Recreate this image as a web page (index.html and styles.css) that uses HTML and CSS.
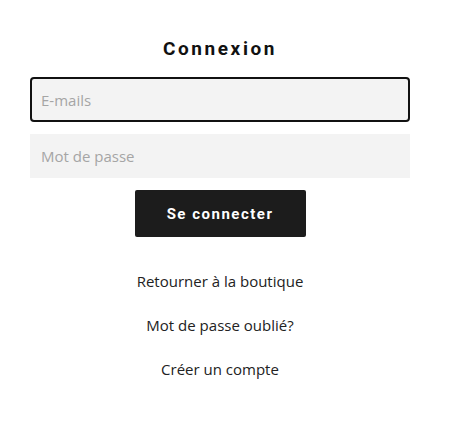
FILE: index.html
```html
<!DOCTYPE html>
<html lang="fr">
<head>
<meta charset="utf-8">
<title>Connexion</title>
<link rel="stylesheet" href="styles.css">
</head>
<body>
<main class="page">
  <form class="login">
    <h1 class="title">Connexion</h1>
    <input class="field field--focus" type="email" placeholder="E-mails" autofocus>
    <input class="field" type="password" placeholder="Mot de passe">
    <button class="submit" type="button">Se connecter</button>
    <nav class="links">
      <a href="#">Retourner à la boutique</a>
      <a href="#">Mot de passe oublié?</a>
      <a href="#">Créer un compte</a>
    </nav>
  </form>
</main>
</body>
</html>
```

FILE: styles.css
```css
html, body {
  margin: 0;
  padding: 0;
  background: #fff;
}
.page {
  width: 380px;
  padding: 37px 0 0 30px;
}
.login {
  display: flex;
  flex-direction: column;
  align-items: center;
}
.title {
  margin: 0 0 16px;
  font-family: Roboto, "Liberation Sans", sans-serif;
  font-weight: 700;
  font-size: 19px;
  line-height: 24px;
  letter-spacing: 2.6px;
  color: #111;
}
.field {
  box-sizing: border-box;
  width: 380px;
  height: 44px;
  margin: 0 0 12px;
  padding: 0 9px;
  border: 2px solid transparent;
  border-radius: 0;
  background: #f3f3f3;
  font-family: "Open Sans", sans-serif;
  font-size: 15px;
  color: #333;
  outline: none;
  caret-color: #333;
}
.field::placeholder {
  color: #a5a5a5;
}
.field--focus {
  height: 45px;
  border-color: #111;
  border-radius: 4px;
}
.submit {
  width: 171px;
  height: 47px;
  margin: 0;
  border: none;
  border-radius: 2px;
  background: #1c1c1c;
  color: #fff;
  font-family: Roboto, "Liberation Sans", sans-serif;
  font-weight: 700;
  font-size: 15px;
  letter-spacing: 1.5px;
}
.links {
  display: flex;
  flex-direction: column;
  align-items: center;
  gap: 22px;
  margin-top: 33px;
}
.links a {
  font-family: "Open Sans", sans-serif;
  font-size: 15px;
  line-height: 22px;
  color: #222;
  text-decoration: none;
}
```
